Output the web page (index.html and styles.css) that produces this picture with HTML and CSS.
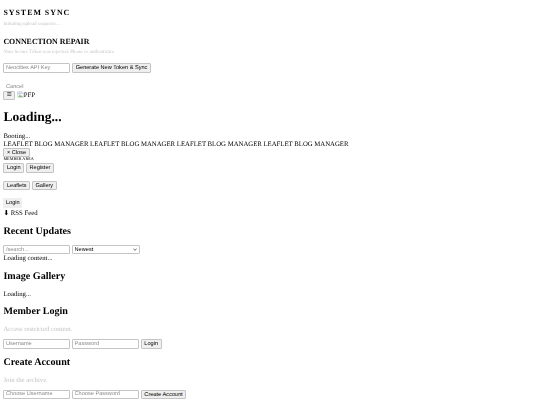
FILE: index.html
```html
<!DOCTYPE html>
<html lang="en">
<head>
    <meta charset="UTF-8">
    <meta name="viewport" content="width=device-width, initial-scale=1.0">
    <title>Leaflet Blog Manager</title>
    <link rel="stylesheet" href="styles.css">
</head>
<body>
    <div class="sync-box">
        <h3 class="sync-title">SYSTEM SYNC</h3>
        <p class="sync-status">Initiating upload sequence...</p>
    </div>
    <div class="repair-box">
        <h3 class="repair-title">CONNECTION REPAIR</h3>
        <p class="sync-status">Your Secure Token was rejected. Please re-authenticate.</p>
        <div class="form-row">
            <input type="password" class="field" placeholder="Neocities API Key">
            <button>Generate New Token &amp; Sync</button>
        </div>
        <button class="cancel-btn">Cancel</button>
    </div>
    <div class="topbar">
        <button class="menu-btn">☰</button>
        <span class="pfp">
            <svg class="broken-img" viewBox="0 0 16 16" width="7" height="7">
                <path d="M1.5 1.5h9l4 4v9h-13z" fill="#fff" stroke="#a8a8a8"/>
                <path d="M10.5 1.5v4h4" fill="#e8e8e8" stroke="#a8a8a8"/>
                <path d="M3 13l3.5-4 2.5 2.5 1.5-1.5 2.5 3z" fill="#5aa545"/>
                <path d="M3 3.5h5.5v4.5h-5.5z" fill="#a9c8f0"/>
            </svg>PFP
        </span>
    </div>
    <h1>Loading...</h1>
    <div class="line">Booting...</div>
    <div class="line">LEAFLET BLOG MANAGER LEAFLET BLOG MANAGER LEAFLET BLOG MANAGER LEAFLET BLOG MANAGER</div>
    <nav class="drawer">
        <button class="close-btn">× Close</button>
        <div class="member-label">MEMBER AREA</div>
        <div class="btn-row first">
            <button>Login</button>
            <button>Register</button>
        </div>
        <div class="btn-row">
            <button>Leaflets</button>
            <button>Gallery</button>
        </div>
        <div class="btn-row">
            <button class="plain-btn">Login</button>
        </div>
        <div class="rss">⬇ RSS Feed</div>
    </nav>
    <section>
        <h2>Recent Updates</h2>
        <div class="form-row search-row">
            <input type="text" class="field" placeholder="/search...">
            <select class="sort">
                <option>Newest</option>
            </select>
        </div>
        <div class="line">Loading content...</div>
    </section>
    <section>
        <h2>Image Gallery</h2>
        <p class="line">Loading...</p>
    </section>
    <section>
        <h2>Member Login</h2>
        <p class="muted">Access restricted content.</p>
        <div class="form-row">
            <input type="text" class="field" placeholder="Username">
            <input type="password" class="field" placeholder="Password">
            <button>Login</button>
        </div>
    </section>
    <section>
        <h2>Create Account</h2>
        <p class="muted">Join the archive.</p>
        <div class="form-row">
            <input type="text" class="field" placeholder="Choose Username">
            <input type="password" class="field" placeholder="Choose Password">
            <button>Create Account</button>
        </div>
    </section>
</body>
</html>
```

FILE: styles.css
```css
body {
    font-family: "Liberation Serif", serif;
    font-size: 6.75px;
    line-height: 8px;
    margin: 0;
    padding: 8px 3.4px 0;
    color: #000;
    background-color: #fff;
    text-rendering: geometricPrecision;
    opacity: 0.999;
}
button, input, select {
    font-family: "Liberation Sans", sans-serif;
    font-size: 5.6px;
    color: #000;
    box-sizing: border-box;
    margin: 0;
    text-rendering: geometricPrecision;
}
button {
    height: 9.5px;
    padding: 1px 2.6px 0;
    border: 1px solid #c4c4c4;
    border-radius: 1px;
    background-color: #efefef;
    line-height: 7px;
}
h1 {
    font-size: 13.5px;
    line-height: 15px;
    margin: 9px 0 9px;
}
h2 {
    font-size: 10.1px;
    line-height: 12px;
    margin: 8px 0;
}
p {
    margin: 0;
}
.sync-title {
    font-size: 7.9px;
    line-height: 9px;
    letter-spacing: 1px;
    margin: 0;
}
.repair-title {
    font-size: 7.9px;
    line-height: 9px;
    margin: 8.5px 0 4.5px;
}
.sync-status {
    font-size: 5px;
    line-height: 6px;
    margin-top: 5px;
    color: #c4c4c4;
}
.repair-title + .sync-status {
    margin-top: 0;
}
.form-row {
    display: flex;
    gap: 1.7px;
    align-items: stretch;
}
.repair-box .form-row {
    margin-top: 7px;
}
.search-row {
    margin: -0.7px 0 0.7px;
}
.field {
    width: 67px;
    height: 9.5px;
    padding: 0 1.5px;
    border: 1px solid #c4c4c4;
    border-radius: 1px;
}
.field::placeholder {
    color: #8a8a8a;
}
.sort {
    width: 67.6px;
    height: 9.5px;
    padding: 0 1.5px;
    border: 1px solid #c4c4c4;
    border-radius: 1px;
    appearance: none;
    background: #fff url("data:image/svg+xml,%3Csvg xmlns='http://www.w3.org/2000/svg' viewBox='0 0 8 5'%3E%3Cpath d='M1 1l3 3 3-3' fill='none' stroke='%23333' stroke-width='1.3'/%3E%3C/svg%3E") no-repeat right 1.5px center / 4px 2.5px;
}
.cancel-btn {
    display: block;
    margin-top: 10px;
    height: 8.5px;
    border: none;
    background-color: transparent;
    color: #888;
}
.topbar {
    display: flex;
    gap: 1.7px;
    align-items: center;
}
.menu-btn {
    width: 11.7px;
    height: 8.5px;
    padding: 0;
}
.broken-img {
    vertical-align: -1px;
}
.line {
    line-height: 7.5px;
}
.close-btn {
    display: block;
    height: 9px;
}
.member-label {
    font-size: 4.2px;
    line-height: 4.5px;
}
.btn-row {
    display: flex;
    gap: 1.7px;
    margin-top: 8px;
}
.btn-row.first {
    margin-top: 1.5px;
}
.plain-btn {
    border: none;
}
.rss {
    margin-top: 2px;
}
.muted {
    color: #c4c4c4;
    margin-bottom: 5px;
}
```
